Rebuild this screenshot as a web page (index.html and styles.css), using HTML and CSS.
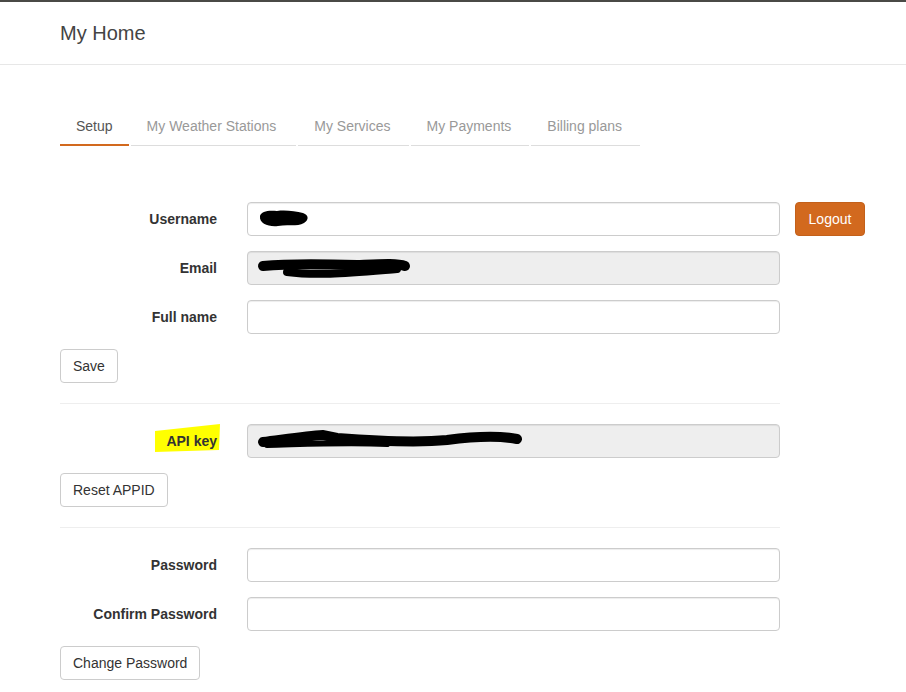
FILE: index.html
```html
<!DOCTYPE html>
<html>
<head>
<meta charset="utf-8">
<title>My Home</title>
<link rel="stylesheet" href="styles.css">
</head>
<body>
<div class="topbar"></div>
<header class="header"><h1 class="title">My Home</h1></header>
<main class="main">
  <ul class="tabs">
    <li class="tab active">Setup</li>
    <li class="tab tab-wide">My Weather Stations</li>
    <li class="tab">My Services</li>
    <li class="tab">My Payments</li>
    <li class="tab">Billing plans</li>
  </ul>

  <section class="form">
    <div class="row">
      <label class="label">Username</label>
      <div class="field">
        <div class="input"></div>
        <svg class="scribble" width="200" height="34" viewBox="0 0 200 34"><path d="M13 14 C14 9 22 8 30 9 C38 8 48 9 56 11 C62 13 62 18 57 21 C50 25 40 22 31 24 C22 25 12 22 13 14 Z" fill="#000"/></svg>
      </div>
      <button class="btn btn-orange">Logout</button>
    </div>
    <div class="row">
      <label class="label">Email</label>
      <div class="field">
        <div class="input disabled"></div>
        <svg class="scribble" width="200" height="34" viewBox="0 0 200 34"><path d="M16 15 C45 12 80 13 110 14 C135 13 150 12 158 15" stroke="#000" stroke-width="10" stroke-linecap="round" fill="none"/><path d="M40 21 C70 25 100 22 150 18" stroke="#000" stroke-width="8" stroke-linecap="round" fill="none"/></svg>
      </div>
    </div>
    <div class="row">
      <label class="label">Full name</label>
      <div class="field"><div class="input"></div></div>
    </div>
    <div class="actions"><button class="btn">Save</button></div>
  </section>

  <hr class="sep">

  <section class="form">
    <div class="row">
      <label class="label"><span class="hl">
        <svg class="hl-mark" width="66" height="28" viewBox="0 0 66 28"><polygon points="0,7 65,0 64,26 0,28" fill="#ffff00"/></svg>
        <span class="hl-text">API key</span></span></label>
      <div class="field">
        <div class="input disabled"></div>
        <svg class="scribble" width="300" height="34" viewBox="0 0 300 34"><path d="M16 18 C40 15 60 12 76 11 L90 14 C130 17 170 19 200 16 C230 12 255 12 270 15" stroke="#000" stroke-width="10" stroke-linecap="round" fill="none"/><path d="M20 21 C60 20 100 18 140 20" stroke="#000" stroke-width="6" stroke-linecap="round" fill="none"/></svg>
      </div>
    </div>
    <div class="actions"><button class="btn">Reset APPID</button></div>
  </section>

  <hr class="sep">

  <section class="form">
    <div class="row">
      <label class="label">Password</label>
      <div class="field"><div class="input"></div></div>
    </div>
    <div class="row">
      <label class="label">Confirm Password</label>
      <div class="field"><div class="input"></div></div>
    </div>
    <div class="actions"><button class="btn">Change Password</button></div>
  </section>
</main>
</body>
</html>
```
FILE: styles.css
```css
* { box-sizing: border-box; }
html, body { margin: 0; padding: 0; background: #fff; }
body {
  font-family: "Liberation Sans", Arial, sans-serif;
  font-size: 14px;
  line-height: 20px;
  color: #333;
}
.topbar { height: 2px; background: #4a4a46; }
.header {
  height: 63px;
  border-bottom: 1px solid #e7e7e7;
  display: flex;
  align-items: center;
  padding-left: 60px;
}
.title {
  margin: 0;
  font-size: 20px;
  font-weight: normal;
  color: #444;
  line-height: 24px;
}
.main { padding: 40px 0 0 60px; }
.tabs {
  list-style: none;
  margin: 0;
  padding: 0;
  display: flex;
}
.tab {
  padding: 11px 18px 9px 16px;
  margin-right: 2px;
  color: #999;
  border-bottom: 1px solid #ddd;
  line-height: 20px;
  height: 41px;
}
.tab.tab-wide { padding-right: 20px; }
.tab.active {
  padding: 11px 16px 8px;
  color: #555;
  border-bottom: 2px solid #d2691e;
}
.tab:last-child { margin-right: 0; }
.form { display: flex; flex-direction: column; gap: 15px; }
.tabs + .form { margin-top: 56px; }
.row {
  display: grid;
  grid-template-columns: 157px 533px auto;
  column-gap: 30px;
  align-items: center;
  height: 34px;
}
.row .btn-orange { margin-left: -15px; justify-self: start; width: 70px; }
.label {
  text-align: right;
  font-weight: bold;
  color: #333;
}
.field { position: relative; height: 34px; }
.input {
  height: 34px;
  border: 1px solid #ccc;
  border-radius: 4px;
  background: #fff;
  box-shadow: inset 0 1px 1px rgba(0,0,0,0.075);
}
.input.disabled { background: #eee; }
.scribble { position: absolute; left: 0; top: 0; }
.actions { display: flex; }
.btn {
  font-family: inherit;
  font-size: 14px;
  line-height: 20px;
  padding: 6px 12px;
  border: 1px solid #ccc;
  border-radius: 4px;
  background: #fff;
  color: #333;
  height: 34px;
}
.btn-orange {
  background: #d2691e;
  border-color: #c3601a;
  color: #fff;
}
.sep {
  border: 0;
  border-top: 1px solid #eee;
  margin: 20px 0;
  width: 720px;
}
.hl { position: relative; display: inline-block; }
.hl-mark { position: absolute; left: -11px; top: -7px; }
.hl-text { position: relative; }
```
